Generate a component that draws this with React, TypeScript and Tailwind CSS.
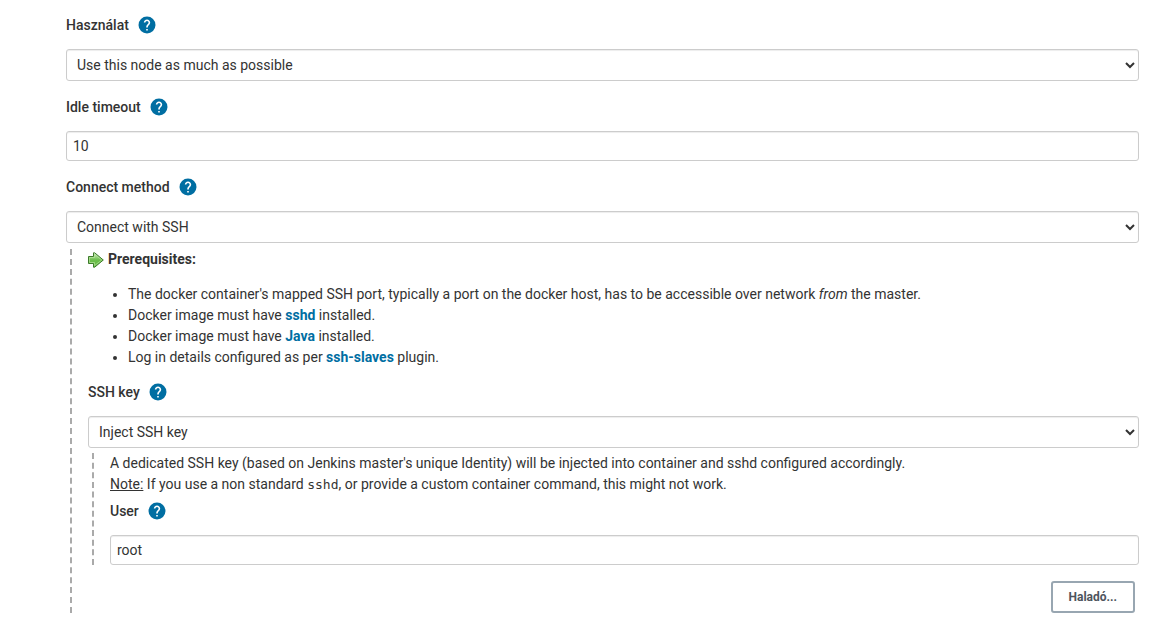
import type { ReactNode } from "react";

const control =
  "block w-full rounded-[3px] border border-[#ccc] bg-white text-[#333] shadow-[inset_0_1px_1px_rgba(0,0,0,0.075)]";

function HelpIcon({ topic }: { topic: string }) {
  return (
    <button type="button" aria-label={`Help: ${topic}`} className="size-4 shrink-0 cursor-pointer">
      <svg viewBox="2 2 20 20" className="size-4 overflow-visible" aria-hidden="true">
        <circle cx="12" cy="12" r="10.6" fill="#006ea2" />
        <path
          fill="#fff"
          d="M13 19h-2v-2h2v2zm2.07-7.75l-.9.92C13.45 12.9 13 13.5 13 15h-2v-.5c0-1.1.45-2.1 1.17-2.83l1.24-1.26c.37-.36.59-.86.59-1.41 0-1.1-.9-2-2-2s-2 .9-2 2H8c0-2.21 1.79-4 4-4s4 1.79 4 4c0 .88-.36 1.68-.93 2.25z"
        />
      </svg>
    </button>
  );
}

function Field({ id, label, children }: { id: string; label: string; children: ReactNode }) {
  return (
    <div>
      <div className="mb-3.5 flex h-5 items-center gap-2.5">
        <label htmlFor={id} className="font-medium">
          {label}
        </label>
        <HelpIcon topic={label} />
      </div>
      {children}
    </div>
  );
}

function SelectField({ id, label, value }: { id: string; label: string; value: string }) {
  return (
    <Field id={id} label={label}>
      <select id={id} className={`${control} h-8 px-1.5`}>
        <option>{value}</option>
      </select>
    </Field>
  );
}

function TextField({ id, label, value }: { id: string; label: string; value: string }) {
  return (
    <Field id={id} label={label}>
      <input id={id} type="text" defaultValue={value} className={`${control} h-[30px] px-1.5`} />
    </Field>
  );
}

function ArrowIcon() {
  return (
    <svg viewBox="0 0 16 16" className="size-4 shrink-0" aria-hidden="true">
      <defs>
        <linearGradient id="arrow-fill" x1="0" y1="0" x2="0" y2="1">
          <stop offset="0" stopColor="#d4edc4" />
          <stop offset="0.5" stopColor="#6cbf4c" />
          <stop offset="1" stopColor="#62b944" />
        </linearGradient>
      </defs>
      <path d="M.5 4.5h5V.8h1.2L15.3 8l-8.6 7.2H5.5v-3.7h-5z" fill="url(#arrow-fill)" stroke="#3c7a2b" />
      <path d="M1.5 5.5h5V2.4L13.8 8l-7.3 5.6v-3.1h-5z" fill="none" stroke="#b5e29b" strokeWidth="0.7" />
    </svg>
  );
}

function DocLink({ href, children }: { href: string; children: ReactNode }) {
  return (
    <a href={href} className="font-bold text-[#006ea2]">
      {children}
    </a>
  );
}

export default function App() {
  return (
    <main className="bg-white pt-[15px] pr-[11px] pb-1 pl-[66px] font-['Roboto','Noto_Sans',sans-serif] text-[14px] leading-[21px] text-[#333]">
      <form className="flex flex-col gap-4">
        <SelectField id="usage" label="Használat" value="Use this node as much as possible" />
        <TextField id="idle-timeout" label="Idle timeout" value="10" />
        <div>
          <SelectField id="connect-method" label="Connect method" value="Connect with SSH" />
          <section className="mt-1.5 ml-1 border-l-2 border-dashed border-[#aaa] pl-4">
            <p className="flex items-center gap-1 font-bold">
              <ArrowIcon />
              Prerequisites:
            </p>
            <ul className="my-3.5 list-disc pl-10">
              <li>
                The docker container's mapped SSH port, typically a port on the docker host, has to be accessible over
                network <em>from</em> the master.
              </li>
              <li>
                Docker image must have <DocLink href="#sshd">sshd</DocLink> installed.
              </li>
              <li>
                Docker image must have <DocLink href="#java">Java</DocLink> installed.
              </li>
              <li>
                Log in details configured as per <DocLink href="#ssh-slaves">ssh-slaves</DocLink> plugin.
              </li>
            </ul>
            <SelectField id="ssh-key" label="SSH key" value="Inject SSH key" />
            <section className="mt-[5px] ml-1 border-l-2 border-dashed border-[#aaa] pl-4">
              <p className="mb-1.5">
                A dedicated SSH key (based on Jenkins master's unique Identity) will be injected into container and sshd
                configured accordingly.
                <br />
                <u>Note:</u> If you use a non standard{" "}
                <code className="font-['DejaVu_Sans_Mono',monospace] text-[13px] leading-none">sshd</code>, or provide a
                custom container command, this might not work.
              </p>
              <TextField id="user" label="User" value="root" />
            </section>
            <div className="mt-4 flex justify-end pr-1">
              <button
                type="button"
                className="h-8 rounded-[3px] border-2 border-[#98a6b1] bg-white px-4 text-[12px] leading-4 font-bold text-[#4d545d]"
              >
                Haladó...
              </button>
            </div>
          </section>
        </div>
      </form>
    </main>
  );
}
